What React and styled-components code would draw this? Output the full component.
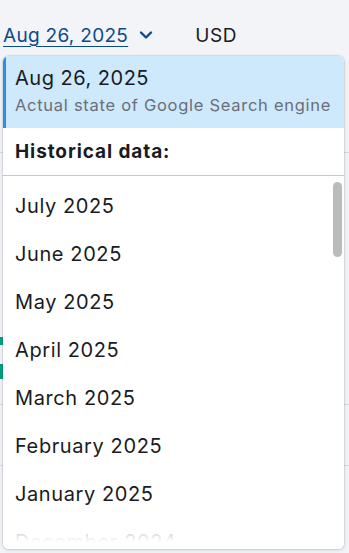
import React from 'react';
import styled, { createGlobalStyle } from 'styled-components';

const GlobalStyle = createGlobalStyle`
  html, body {
    margin: 0;
    padding: 0;
    background: #f3f4f8;
    font-family: Inter, "Noto Sans", sans-serif;
    color: #191b23;
  }
`;

const Page = styled.div`
  position: relative;
  width: 349px;
  height: 553px;
  overflow: hidden;
`;

const TopBar = styled.div`
  display: flex;
  align-items: center;
  padding: 21px 0 0 3px;
  height: 28px;
`;

const DateLink = styled.button`
  display: flex;
  align-items: center;
  gap: 11px;
  border: 0;
  background: none;
  padding: 0;
  font: inherit;
  font-size: 19px;
  letter-spacing: 0.3px;
  color: #0b4a8b;
  cursor: pointer;
`;

const DateText = styled.span`
  text-decoration: underline;
  text-underline-offset: 4px;
  text-decoration-thickness: 1px;
`;

const Currency = styled.span`
  margin-left: 42px;
  font-size: 19px;
  letter-spacing: 0.6px;
  color: #191b23;
`;

const Backdrop = styled.div`
  margin-top: 103px;
  border-top: 1px solid #d8dae2;
  display: flex;
  flex-direction: column;
`;

const BgRow = styled.div`
  height: ${(p) => p.$h}px;
  border-bottom: ${(p) => (p.$line ? '1px solid #d8dae2' : '0')};
  display: flex;
  align-items: flex-start;
`;

const GreenMark = styled.div`
  width: 6px;
  height: ${(p) => p.$h}px;
  background: #009f81;
`;

const Dropdown = styled.div`
  position: absolute;
  top: 56px;
  left: 3px;
  width: 341px;
  height: 493px;
  background: #fff;
  border-radius: 6px;
  box-shadow: 0 0 0 1px rgba(25, 27, 35, 0.08), 0 1px 4px rgba(25, 27, 35, 0.15);
  display: flex;
  flex-direction: column;
  overflow: hidden;
`;

const Current = styled.div`
  background: #cde9fb;
  border-left: 3px solid #2b8fe8;
  padding: 9px 12px 12px 9px;
  height: 51px;
`;

const CurrentTitle = styled.div`
  font-size: 20px;
  line-height: 26px;
  letter-spacing: 0.5px;
`;

const CurrentSub = styled.div`
  margin-top: 3px;
  font-size: 16.5px;
  line-height: 22px;
  letter-spacing: 0.72px;
  color: #6c6e79;
  white-space: nowrap;
`;

const SectionTitle = styled.div`
  font-size: 19px;
  font-weight: 700;
  letter-spacing: 0.9px;
  padding: 0 12px;
  height: 47px;
  display: flex;
  align-items: center;
  border-bottom: 1px solid #c4c7cf;
`;

const ListWrap = styled.div`
  position: relative;
  flex: 1;
  overflow: hidden;
`;

const List = styled.ul`
  list-style: none;
  margin: 0;
  padding: 6px 0 0;
`;

const Item = styled.li`
  height: 48px;
  display: flex;
  align-items: center;
  padding: 0 12px;
  font-size: 20px;
  letter-spacing: 0.6px;
  color: #191b23;
  white-space: nowrap;
`;

const Fade = styled.div`
  position: absolute;
  left: 0;
  right: 0;
  bottom: 0;
  height: 44px;
  background: linear-gradient(rgba(255, 255, 255, 0.3), #fff 85%);
  pointer-events: none;
`;

const Scrollbar = styled.div`
  position: absolute;
  top: 6px;
  right: 2px;
  width: 9px;
  height: 75px;
  border-radius: 5px;
  background: #bbbbbb;
`;

const Chevron = () => (
  <svg width="14" height="14" viewBox="0 0 14 14" fill="none">
    <path d="M2 4.5 7 9.5l5-5" stroke="#0b4a8b" strokeWidth="2.4" strokeLinecap="round" strokeLinejoin="round" />
  </svg>
);

const months = [
  'July 2025',
  'June 2025',
  'May 2025',
  'April 2025',
  'March 2025',
  'February 2025',
  'January 2025',
  'December 2024',
];

export default function App() {
  return (
    <Page>
      <GlobalStyle />
      <TopBar>
        <DateLink>
          <DateText>Aug 26, 2025</DateText>
          <Chevron />
        </DateLink>
        <Currency>USD</Currency>
      </TopBar>
      <Backdrop>
        <BgRow $h={184} />
        <BgRow $h={27}>
          <GreenMark $h={8} />
        </BgRow>
        <BgRow $h={40} $line>
          <GreenMark $h={15} />
        </BgRow>
        <BgRow $h={60} $line />
      </Backdrop>
      <Dropdown>
        <Current>
          <CurrentTitle>Aug 26, 2025</CurrentTitle>
          <CurrentSub>Actual state of Google Search engine</CurrentSub>
        </Current>
        <SectionTitle>Historical data:</SectionTitle>
        <ListWrap>
          <List>
            {months.map((m) => (
              <Item key={m}>{m}</Item>
            ))}
          </List>
          <Fade />
          <Scrollbar />
        </ListWrap>
      </Dropdown>
    </Page>
  );
}
